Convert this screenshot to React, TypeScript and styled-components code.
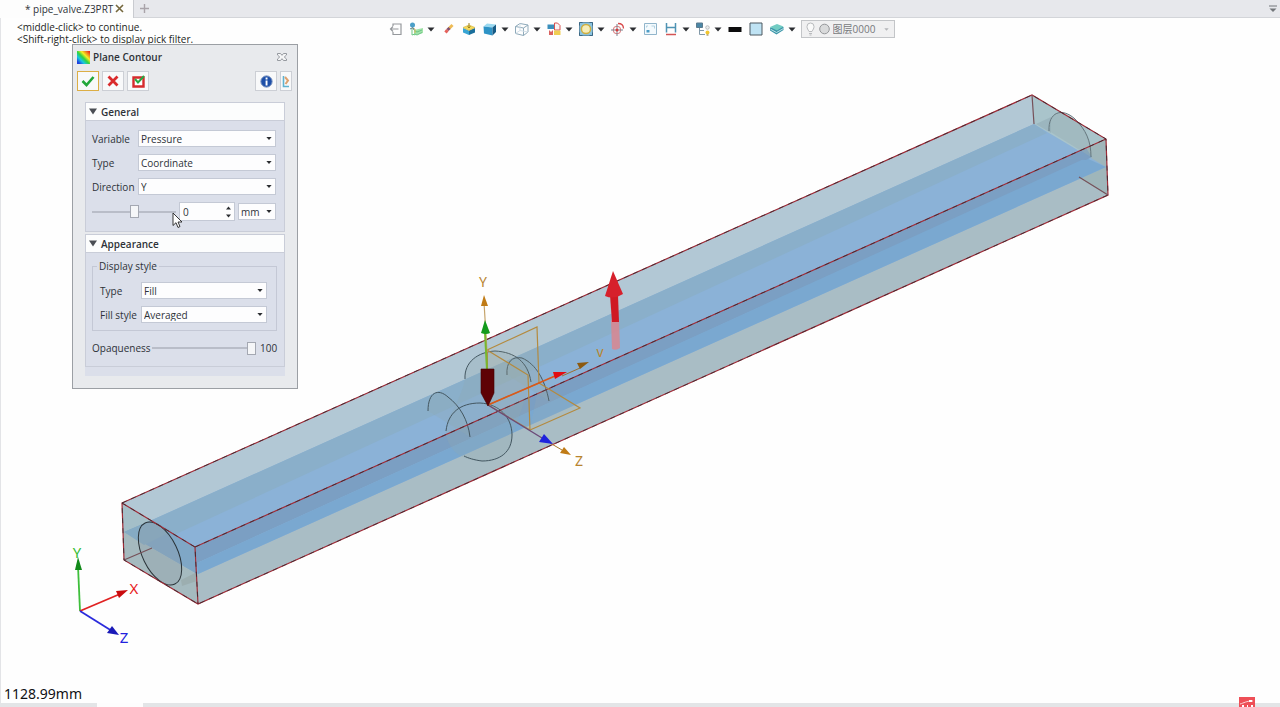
import React from "react";
import styled, { createGlobalStyle, css } from "styled-components";

const GlobalStyle = createGlobalStyle`
  * { box-sizing: border-box; }
  body {
    margin: 0;
    background: #fefefe;
    color: #2e3238;
    font-family: "Open Sans", "Noto Sans", "Noto Sans CJK SC", sans-serif;
    font-size: 10px;
    line-height: 12px;
  }
  button, input, select { font: inherit; color: inherit; margin: 0; }
`;

const App = styled.div`
  display: flex;
  flex-direction: column;
  min-height: 100vh;
`;

const TabBar = styled.header`
  display: flex;
  align-items: center;
  height: 18px;
  background: #e7e8ec;
  border-bottom: 1px solid #d3d5d9;
`;

const Tab = styled.div`
  display: flex;
  align-items: center;
  gap: 2px;
  height: 18px;
  padding: 0 9px 0 25px;
  background: #fdfdfd;
  border-right: 1px solid #c9cbd0;
`;

const PlainButton = styled.button`
  display: flex;
  align-items: center;
  justify-content: center;
  padding: 0;
  border: 0;
  background: none;
`;

const AddTab = styled(PlainButton)`
  width: 20px;
  height: 16px;
`;

const TabMenu = styled(PlainButton)`
  width: 14px;
  height: 16px;
  margin-left: auto;
`;

const Viewport = styled.main`
  position: relative;
  flex: 1;
  display: flex;
  flex-direction: column;
  border-left: 1px solid #e3e4e7;
`;

const Scene = styled.svg`
  position: absolute;
  inset: 0;
  width: 100%;
  height: 100%;
`;

const TopRow = styled.div`
  position: relative;
  display: grid;
  grid-template-columns: 1fr auto 1fr;
  align-items: start;
  padding-top: 2px;
`;

const Hints = styled.p`
  margin: 1px 0 0;
  padding-left: 16px;
  color: #1d1f22;
  white-space: pre-line;
`;

const Toolbar = styled.div`
  display: flex;
  align-items: center;
  gap: 5px;
`;

const ToolButton = styled(PlainButton)`
  gap: 3px;
  height: 16px;
`;

const LayerPicker = styled.div`
  display: flex;
  align-items: center;
  gap: 2px;
  width: 94px;
  height: 18px;
  padding: 0 5px 0 4px;
  border: 1px solid #c3c5c8;
  background: #f0f0f1;
  color: #77797c;
`;

const LayerSelect = styled.select`
  flex: 1;
  min-width: 0;
  height: 16px;
  padding: 0;
  border: 0;
  background: none;
  appearance: none;
`;

const Dialog = styled.section`
  position: absolute;
  left: 71px;
  top: 26px;
  width: 226px;
  padding: 5px 12px 12px;
  border: 1px solid #9b9fa4;
  background: #e8eaed;
`;

const TitleRow = styled.div`
  display: flex;
  align-items: center;
  gap: 3px;
  height: 14px;
  margin: 0 -2px 0 -8px;
`;

const Title = styled.h1`
  flex: 1;
  margin: 0;
  font-size: 10px;
  line-height: 14px;
  font-weight: 600;
`;

const ActionRow = styled.div`
  display: flex;
  gap: 3px;
  margin: 7px -7px 11px -8px;
`;

const ActionButton = styled(PlainButton)<{ $active?: boolean; $narrow?: boolean }>`
  width: ${(p) => (p.$narrow ? 12 : 22)}px;
  height: 20px;
  overflow: hidden;
  border: 1px solid ${(p) => (p.$active ? "#dcae45" : "#cccfd5")};
  background: #f8f9fa;
`;

const Spacer = styled.span`
  flex: 1;
`;

const Panel = styled.section`
  border: 1px solid #c9cdd8;
  background: #dbdfea;
  & + & { margin-top: 2px; }
`;

const PanelHead = styled.h2`
  display: flex;
  align-items: center;
  gap: 4px;
  height: 18px;
  margin: 0;
  padding-left: 3px;
  border-bottom: 1px solid #c9cdd8;
  background: #fcfdfd;
  font-size: 10px;
  line-height: 12px;
  font-weight: 600;
`;

const PanelBody = styled.div`
  display: flex;
  flex-direction: column;
  gap: 7px;
  padding: 9px 8px 10px 6px;
`;

const Field = styled.div<{ $label: number }>`
  display: grid;
  grid-template-columns: ${(p) => p.$label}px minmax(0, 1fr);
  align-items: center;
  height: 17px;
`;

const SelectWrap = styled.span`
  position: relative;
  display: block;
  svg {
    position: absolute;
    right: 4px;
    top: 6px;
    pointer-events: none;
  }
`;

const box = css`
  border: 1px solid #c4c9d5;
  border-radius: 0;
  background: #fdfdfe;
  outline: 0;
`;

const Select = styled.select`
  ${box}
  display: block;
  width: 100%;
  height: 17px;
  padding: 0 2px;
  appearance: none;
`;

const ValueRow = styled.div`
  display: grid;
  grid-template-columns: 84px minmax(0, 1fr) 38px;
  gap: 3px;
  align-items: center;
  height: 19px;
`;

const NumberBox = styled.span`
  ${box}
  display: flex;
  align-items: center;
  height: 19px;
  padding-right: 3px;
`;

const NumberInput = styled.input`
  flex: 1;
  min-width: 0;
  width: 100%;
  padding: 0 3px;
  border: 0;
  background: none;
  outline: 0;
`;

const Slider = styled.input`
  width: 100%;
  height: 14px;
  appearance: none;
  background: linear-gradient(#b9bdc8, #b9bdc8) center / 100% 2px no-repeat;
  &::-webkit-slider-thumb {
    appearance: none;
    width: 9px;
    height: 13px;
    border: 1px solid #a4a8b2;
    background: #f5f6f8;
  }
`;

const Group = styled.fieldset`
  display: flex;
  flex-direction: column;
  gap: 7px;
  min-width: 0;
  margin: 0;
  padding: 10px 9px 7px 7px;
  border: 1px solid #c4c8d5;
  legend {
    padding: 0 2px;
    margin-left: -3px;
  }
`;

const AppearanceBody = styled(PanelBody)`
  padding: 7px 7px 11px 6px;
  gap: 10px;
`;

const OpacityRow = styled.div`
  display: grid;
  grid-template-columns: 56px minmax(0, 1fr) 17px;
  gap: 4px;
  align-items: center;
  height: 14px;
`;

const PanelFoot = styled.div`
  height: 9px;
  background: #dbdfea;
`;

const Pointer = styled.svg`
  position: absolute;
  left: 171px;
  top: 194px;
`;

const Measure = styled.output`
  position: relative;
  margin-top: auto;
  padding-left: 3px;
  color: #101113;
  font-family: "Noto Sans", sans-serif;
  font-size: 14px;
  line-height: 18px;
`;

const BottomStrip = styled.footer`
  position: relative;
  display: flex;
  height: 4px;
  padding-left: 97px;
  background: #e3e5e7;
`;

const BottomTab = styled.span`
  width: 46px;
  background: #fdfdfd;
`;

const Badge = styled.svg`
  position: absolute;
  right: 25px;
  bottom: 0;
`;

const Caret = ({ color = "#2b2d31", w = 8 }: { color?: string; w?: number }) => (
  <svg width={w} height="5" viewBox="0 0 8 5" aria-hidden="true">
    <path d="M0.5 0.5h7L4 4.5z" fill={color} />
  </svg>
);

const Icon = ({ children }: { children: React.ReactNode }) => (
  <svg width="16" height="16" viewBox="0 0 16 16" fill="none" aria-hidden="true">
    {children}
  </svg>
);

const tools: { name: string; menu?: boolean; art: React.ReactNode }[] = [
  {
    name: "Exit",
    art: <path d="M6 5V3h8v10.500H6V11M11.500 8H3M6 5.500L3.500 8 6 10.500" stroke="#95989c" strokeWidth="1.200" />,
  },
  {
    name: "Datum",
    menu: true,
    art: (
      <>
        <path d="M6 9l9-2v5l-9 2.500z" fill="#a3e3aa" />
        <path d="M4 7v7l3-1 2 1 5-2.500M6 9.500l3 1.500 5-2" stroke="#6cc584" />
        <path d="M4 7l3 1v4" stroke="#d9bd59" />
        <circle cx="4.500" cy="4" r="2.500" fill="#4c9fc8" />
        <path d="M2 8l3-1.500L6 9" stroke="#5d8496" />
      </>
    ),
  },
  {
    name: "Erase",
    art: (
      <>
        <path d="M12.500 4L9 7.500" stroke="#eebb55" strokeWidth="3" />
        <path d="M9.500 7L7.500 9" stroke="#80506f" strokeWidth="3" />
        <path d="M7.500 9L5.500 11.500" stroke="#e5615b" strokeWidth="3" />
      </>
    ),
  },
  {
    name: "Section",
    art: (
      <>
        <path d="M2 7l6 2.500V14l-6-2.500z" fill="#39a5d4" />
        <path d="M8 9.500L14 7v4.500L8 14z" fill="#1b6f9c" />
        <path d="M2 6.500L8 4l6 2.500-6 3z" fill="#f5dc5c" stroke="#d3b23c" strokeWidth=".6" />
        <path d="M8 2v4.500M6.500 5.500L8 7l1.500-1.500" stroke="#9c8022" />
      </>
    ),
  },
  {
    name: "Shaded display",
    menu: true,
    art: (
      <>
        <path d="M1.500 5.500L5 2.500l9 1-3.500 3z" fill="#9ad9f0" />
        <path d="M1.500 5.500l9 1v8l-8.500-2z" fill="#2e93c6" />
        <path d="M10.500 6.500l3.500-3v7.500l-3.500 3.500z" fill="#175b85" />
      </>
    ),
  },
  {
    name: "Wireframe",
    menu: true,
    art: (
      <>
        <path d="M1.500 5.500L6 2.500l8 1.500v7l-4.500 3.500-8-2zM1.500 5.500l8 1.500L14 4M9.500 7v7.500" stroke="#8faaba" />
        <path d="M6 2.500v7l-4.500 3M6 9.500l8 1.500" stroke="#d2dfe8" />
      </>
    ),
  },
  {
    name: "Replace",
    menu: true,
    art: (
      <>
        <path d="M1.500 3.500h6.500v4.500H1.500z" fill="#3a8fbc" />
        <path d="M8.500 2h3l2.500 2.500V9H8.500z" fill="#f9f3f3" stroke="#d85251" />
        <path d="M8 9.500h6.500V14H8z" fill="#f0ce53" />
        <path d="M3 13V9l2 2 2-2v5H3z" fill="#d96260" />
      </>
    ),
  },
  {
    name: "Zoom fit",
    menu: true,
    art: (
      <>
        <path d="M1.500 1.500h13v13h-13z" fill="#8cc4e0" stroke="#6492ac" />
        <circle cx="8" cy="8" r="4.600" fill="#f6edb8" stroke="#cfae40" strokeWidth="1.500" />
        <path d="M1.500 4.500v-3h3M11.500 1.500h3v3M14.500 11.500v3h-3M4.500 14.500h-3v-3" stroke="#3c6783" />
      </>
    ),
  },
  {
    name: "Align view",
    menu: true,
    art: (
      <>
        <circle cx="7" cy="9" r="3.800" stroke="#dc7577" />
        <path d="M7 3v12M1 9h12" stroke="#7a8390" />
        <circle cx="7" cy="9" r="1.500" fill="#d8393b" />
        <path d="M8 2.500c3.500 0 5.500 2 5.500 5" stroke="#d8494b" strokeWidth="1.300" />
      </>
    ),
  },
  {
    name: "Window",
    art: (
      <>
        <path d="M2.500 2.500h12v11h-12z" fill="#f4fafd" stroke="#91b5cb" />
        <path d="M4.500 9h3v2.500h-3z" fill="#4c9cc6" />
        <path d="M9.500 5h3v2.500M6 5H4.500v1.500" stroke="#b3d2e2" />
      </>
    ),
  },
  {
    name: "Measure",
    menu: true,
    art: (
      <>
        <path d="M3.500 2v9.500M12.500 2v9.500M4 6.500h8" stroke="#4f93b3" strokeWidth="1.500" />
        <path d="M3 13.500h10" stroke="#d35455" strokeWidth="1.500" />
      </>
    ),
  },
  {
    name: "Visibility",
    menu: true,
    art: (
      <>
        <path d="M1.500 2h6v4.500h-6z" fill="#4a87a6" stroke="#5c7b8e" />
        <path d="M4.500 7v6.500H10M4.500 9.500H9" stroke="#8299a8" />
        <circle cx="12.500" cy="6.500" r="1.800" fill="#eceded" stroke="#a6a9ac" strokeWidth=".7" />
        <circle cx="12.500" cy="11.500" r="2" fill="#f2c62f" />
        <path d="M11.500 14h2" stroke="#8c7837" />
      </>
    ),
  },
  { name: "Line colour", art: <path d="M1.500 6h13v5h-13z" fill="#0c0c0d" /> },
  { name: "Background", art: <path d="M2 2h12v12H2z" fill="#bfe3f4" stroke="#4d5961" /> },
  {
    name: "Layers",
    menu: true,
    art: (
      <>
        <path d="M1 6.500v3l6.500 4L14.500 9V6z" fill="#3b95a8" />
        <path d="M1 6l7-3 6.500 2.500L8 9.500z" fill="#72ccc3" />
        <path d="M1.500 8.200l6 3.300 7-4" stroke="#c2e6ea" />
      </>
    ),
  },
];

const Chooser = ({ label, options, id }: { label: string; options: string[]; id?: string }) => (
  <SelectWrap>
    <Select id={id} aria-label={label} defaultValue={options[0]}>
      {options.map((o) => (
        <option key={o}>{o}</option>
      ))}
    </Select>
    <Caret w={6} />
  </SelectWrap>
);

const Model = () => (
  <Scene viewBox="1 18 1279 685" aria-label="Pipe valve model">
    <path d="M122 503L1032 95l74 44 2 56L198 604l-74-44z" fill="#a9bdc5" />
    <path d="M122 503L1032 95l74 44L195 547z" fill="#b2c8d5" />
    <path d="M1032 95l74 44-55 25-17-40z" fill="#a9c4cb" />
    <path d="M1106 139l2 56-30-18-12-20z" fill="#9fb6ba" />

    <path d="M124 532L152 520 1034 124l72 43L198 574z" fill="#8bb2d7" />
    <path d="M124 532L152 520 1034 124l13 9L150 546z" fill="#8aafca" />
    <path d="M195 547L1064 158l22 1L197 563z" fill="#7b9fc3" />
    <path d="M197 563L1086 158l20 9L198 574z" fill="#7aa8d0" />
    <path d="M1064 158l22-10 6 9-6 3z" fill="#7b9fc3" />

    <path d="M122 503l73 44 1 27-72-42z" fill="#a4bfc8" />
    <path d="M124 532l28-12 43 27 2 27z" fill="#7fa7c6" />
    <path d="M124 532l72 42 2 30-74-44z" fill="#a5babf" />
    <path d="M124 532l28-12 20 11-28 14z" fill="#85abc4" />
    <path d="M181 580l14-7 2 8-15 5z" fill="#9caeb0" />
    <path d="M1036 124l15-7v16z" fill="#9cb6bf" />

    <g fill="#90a9b4" fillOpacity=".3">
      <path d="M446 431c2-18 14-28 19-52-1-17 13-27 30-28 20 1 33 11 36 31l-19 55c0 15-12 24-30 24-24 0-36-15-36-30z" />
      <path d="M428 411c0-19 10-23 20-14 12 9 20 23 22 40z" />
      <path d="M507 375c-1-13 5-19 15-17 14 6 23 22 27 43z" />
    </g>
    <path d="M1049 131c-1-19 13-24 26-12 11 11 16 22 16 38z" fill="#96b0b4" fillOpacity=".45" />
    <ellipse cx="160" cy="553.500" rx="34" ry="17.500" transform="rotate(64 160 553.500)" fill="#8f9fa8" fillOpacity=".35" stroke="#2a3338" />

    <g fill="none" stroke="#435660">
      <path d="M428 411c0-19 10-23 20-14 12 9 20 23 22 40" />
      <path d="M446 431c2-18 14-28 34-28 20 1 32 15 32 32s-12 26-30 26c-8-1-14-3-18-5" />
      <path d="M465 379c-1-17 13-27 30-28 20 1 33 11 36 31" />
      <path d="M507 375c-1-13 5-19 15-17 14 6 23 22 27 43" />
      <path d="M1049 131c-1-19 13-24 26-12 11 11 16 22 16 38" stroke="#65767d" />
    </g>

    <g fill="none" stroke="#a02a36" strokeWidth="1.200">
      <path d="M122 503L1032 95l74 44 2 56L198 604l-74-44zM122 503l73 44 3 57M195 547L1106 139" />
      <path d="M1032 95l2 29M1108 195l-29-18M124 560l28-12" stroke="#765159" />
    </g>
    <g fill="none" stroke="#23282d" strokeWidth=".7" strokeDasharray="5 5">
      <path d="M122 503L1032 95l74 44 2 56L198 604l-74-44zM122 503l73 44 3 57M195 547L1106 139" />
    </g>

    <g fill="#b9b49a" fillOpacity=".12" stroke="#b48a3e" strokeWidth="1.200">
      <path d="M487 350l50-23 2 56-51 22z" />
      <path d="M487 350l41 25 2 55-42-25z" />
      <path d="M539 383l41 25-50 22" />
    </g>

    <path d="M487 352l-3-50" stroke="#c5a36a" strokeWidth="1.200" />
    <path d="M487 370l-2-37" stroke="#77b82e" strokeWidth="2" />
    <path d="M484 295l4 11h-7z" fill="#c07b16" />
    <path d="M485 320l5 13q-4 2-9 0z" fill="#139b1d" />
    <path d="M488 405l67-29" stroke="#d9581b" strokeWidth="1.600" />
    <path d="M562 376l18-8" stroke="#9c7030" />
    <path d="M567 372l-14 0 2 7z" fill="#e30c10" />
    <path d="M589 362l-12 1 3 6z" fill="#8c5a10" />
    <path d="M488 405l54 33" stroke="#6c4a78" strokeWidth="1.400" />
    <path d="M550 443l12 7" stroke="#a97a2c" />
    <path d="M553 444l-9-10-5 8z" fill="#1f22dd" />
    <path d="M571 455l-7-8-4 6z" fill="#c07b16" />
    <path d="M481 369h13v24l-6 13-7-13z" fill="#5e0205" stroke="#3f0002" strokeWidth=".6" />

    <path d="M611 320h8l1 28q-4 3-8 1z" fill="#d9868f" fillOpacity=".85" />
    <path d="M610 295h8l1 27h-7z" fill="#cf1a24" />
    <path d="M613 271l10 23q-9 6-18 2z" fill="#d6202b" />

    <g fontFamily="Noto Sans, sans-serif" fontSize="14" textAnchor="middle" fill="#b8852f">
      <text x="483" y="287">Y</text>
      <text x="579" y="466">Z</text>
      <text x="600" y="357">v</text>
    </g>

    <g strokeWidth="1.800">
      <path d="M80 611l-2-45" stroke="#3fbf3c" />
      <path d="M80 611l40-17" stroke="#e02222" />
      <path d="M80 611l32 20" stroke="#2b2bdc" />
    </g>
    <path d="M78 557l4 13h-7z" fill="#128a1a" />
    <path d="M128 590l-12 1 3 7z" fill="#c90b0e" />
    <path d="M119 635l-7-9-5 7z" fill="#1a1ab8" />
    <g fontFamily="Noto Sans, sans-serif" fontSize="15" textAnchor="middle">
      <text x="77" y="558" fill="#35bd35">Y</text>
      <text x="134" y="594" fill="#e81c1c">X</text>
      <text x="124" y="643" fill="#2222dd">Z</text>
    </g>
  </Scene>
);

const Disclosure = () => (
  <svg width="8" height="7" viewBox="0 0 8 7" aria-hidden="true">
    <path d="M0 .5h8L4 6.500z" fill="#4a4e54" />
  </svg>
);

export default function PlaneContourApp() {
  return (
    <App>
      <GlobalStyle />
      <TabBar>
        <Tab>
          <span>* pipe_valve.Z3PRT</span>
          <PlainButton aria-label="Close tab">
            <svg width="9" height="9" viewBox="0 0 9 9">
              <path d="M1 1l7 7M8 1L1 8" stroke="#74673c" strokeWidth="1.600" />
            </svg>
          </PlainButton>
        </Tab>
        <AddTab aria-label="New tab">
          <svg width="9" height="9" viewBox="0 0 9 9">
            <path d="M4.500 0v9M0 4.500h9" stroke="#a9a3a9" strokeWidth="1.400" />
          </svg>
        </AddTab>
        <TabMenu aria-label="Tab list">
          <svg width="8" height="8" viewBox="0 0 8 8">
            <path d="M0 1h8" stroke="#73767a" />
            <path d="M0.500 3.500h7L4 7z" fill="#73767a" />
          </svg>
        </TabMenu>
      </TabBar>

      <Viewport>
        <Model />
        <TopRow>
          <Hints>{"<middle-click> to continue.\n<Shift-right-click> to display pick filter."}</Hints>
          <Toolbar>
            {tools.map((t) => (
              <ToolButton key={t.name} aria-label={t.name}>
                <Icon>{t.art}</Icon>
                {t.menu && <Caret />}
              </ToolButton>
            ))}
            <LayerPicker>
              <svg width="25" height="14" viewBox="0 0 25 14" fill="none" stroke="#b8babd" aria-hidden="true">
                <path d="M3 9.500C2 7.500 1 6.500 1 4.500a3.500 3.500 0 0 1 7 0c0 2-1 3-2 5zM3 11.500h3M3.500 13h2" fill="#fafafa" />
                <circle cx="18.500" cy="7" r="4.800" fill="#d9dadb" stroke="#95979a" />
              </svg>
              <LayerSelect aria-label="Layer" defaultValue="图层0000">
                <option>图层0000</option>
              </LayerSelect>
              <Caret color="#b4b6b9" w={5} />
            </LayerPicker>
          </Toolbar>
        </TopRow>

        <Dialog aria-label="Plane Contour">
          <TitleRow>
            <svg width="13" height="13" viewBox="0 0 13 13" aria-hidden="true">
              <defs>
                <linearGradient id="contour" x1="0" y1="1" x2="1" y2="0">
                  <stop offset="0.100" stopColor="#1f3fe0" />
                  <stop offset="0.300" stopColor="#18c8e0" />
                  <stop offset="0.480" stopColor="#2fd23f" />
                  <stop offset="0.650" stopColor="#f5ee25" />
                  <stop offset="0.950" stopColor="#e82a1c" />
                </linearGradient>
              </defs>
              <rect width="13" height="13" fill="url(#contour)" />
            </svg>
            <Title>Plane Contour</Title>
            <PlainButton aria-label="Close">
              <svg width="10" height="8" viewBox="0 0 10 8" fill="#f5f6f7" stroke="#8b9096" strokeWidth=".9">
                <path d="M.5.5h3L5 2.300 6.500.5h3v1.500L7.300 4l2.200 2v1.500h-3L5 5.700 3.500 7.500h-3V6l2.200-2L.5 2z" />
              </svg>
            </PlainButton>
          </TitleRow>

          <ActionRow>
            <ActionButton $active aria-label="OK">
              <svg width="14" height="12" viewBox="0 0 14 12" fill="none">
                <path d="M1.500 6l4 4 7-8" stroke="#22a73a" strokeWidth="2.600" />
              </svg>
            </ActionButton>
            <ActionButton aria-label="Cancel">
              <svg width="12" height="12" viewBox="0 0 12 12">
                <path d="M1.500 1.500l9 9M10.500 1.500l-9 9" stroke="#d92a2c" strokeWidth="2.800" />
              </svg>
            </ActionButton>
            <ActionButton aria-label="Apply">
              <svg width="13" height="13" viewBox="0 0 13 13" fill="none">
                <path d="M1.500 2.500h10v9h-10z" fill="#fff" stroke="#d62b2d" strokeWidth="2.400" />
                <path d="M3 4l3 3.500L12 1" stroke="#27a843" strokeWidth="2" />
              </svg>
            </ActionButton>
            <Spacer />
            <ActionButton aria-label="Information">
              <svg width="13" height="13" viewBox="0 0 13 13">
                <circle cx="6.500" cy="6.500" r="5.700" fill="#1d4fa8" stroke="#8ba0c6" />
                <path d="M5.600 5.500h1.900v5H5.600zM5.600 2.600h1.900v1.900H5.600z" fill="#fff" />
              </svg>
            </ActionButton>
            <ActionButton $narrow aria-label="More">
              <svg width="8" height="13" viewBox="0 0 8 13" fill="none">
                <path d="M1.500 1v10.500H7" stroke="#5fb2d0" strokeWidth="1.600" />
                <path d="M3 2l3 3.500L3.500 9" stroke="#dda16f" strokeWidth="2" />
              </svg>
            </ActionButton>
          </ActionRow>

          <Panel>
            <PanelHead>
              <Disclosure />
              General
            </PanelHead>
            <PanelBody>
              <Field $label={46}>
                <label htmlFor="variable">Variable</label>
                <Chooser id="variable" label="Variable" options={["Pressure"]} />
              </Field>
              <Field $label={46}>
                <label htmlFor="type">Type</label>
                <Chooser id="type" label="Type" options={["Coordinate"]} />
              </Field>
              <Field $label={46}>
                <label htmlFor="direction">Direction</label>
                <Chooser id="direction" label="Direction" options={["Y", "X", "Z"]} />
              </Field>
              <ValueRow>
                <Slider type="range" aria-label="Position" min={-50} max={50} defaultValue={0} />
                <NumberBox>
                  <NumberInput aria-label="Position value" defaultValue="0" />
                  <svg width="5" height="12" viewBox="0 0 6 13" fill="#2b2d31" aria-hidden="true">
                    <path d="M3 0l3 3.500H0zM3 13l3-3.500H0z" />
                  </svg>
                </NumberBox>
                <Chooser label="Unit" options={["mm"]} />
              </ValueRow>
            </PanelBody>
          </Panel>

          <Panel>
            <PanelHead>
              <Disclosure />
              Appearance
            </PanelHead>
            <AppearanceBody>
              <Group>
                <legend>Display style</legend>
                <Field $label={41}>
                  <label htmlFor="fill-type">Type</label>
                  <Chooser id="fill-type" label="Type" options={["Fill"]} />
                </Field>
                <Field $label={41}>
                  <label htmlFor="fill-style">Fill style</label>
                  <Chooser id="fill-style" label="Fill style" options={["Averaged"]} />
                </Field>
              </Group>
              <OpacityRow>
                <label htmlFor="opaqueness">Opaqueness</label>
                <Slider id="opaqueness" type="range" min={0} max={100} defaultValue={100} />
                <span>100</span>
              </OpacityRow>
            </AppearanceBody>
          </Panel>
          <PanelFoot />
        </Dialog>

        <Pointer width="11" height="17" viewBox="0 0 11 17" aria-hidden="true">
          <path d="M1 1v12.500l3-2.800 2 4.800 2-1-2-4.500h4z" fill="#fff" stroke="#222" strokeWidth=".9" />
        </Pointer>
        <Measure>1128.99mm</Measure>
      </Viewport>

      <BottomStrip>
        <BottomTab />
        <Badge width="16" height="10" viewBox="0 0 16 10" aria-hidden="true">
          <path d="M0 0h16v10H0z" fill="#ee4f57" />
          <path d="M1 7c4-1 6-3 13-3" stroke="#fbd5d7" fill="none" />
          <path d="M3 8h2v2H3zM8 8h1v2H8zM12 8h2v2h-2zM10 3h3v2h-3z" fill="#fff" />
        </Badge>
      </BottomStrip>
    </App>
  );
}
